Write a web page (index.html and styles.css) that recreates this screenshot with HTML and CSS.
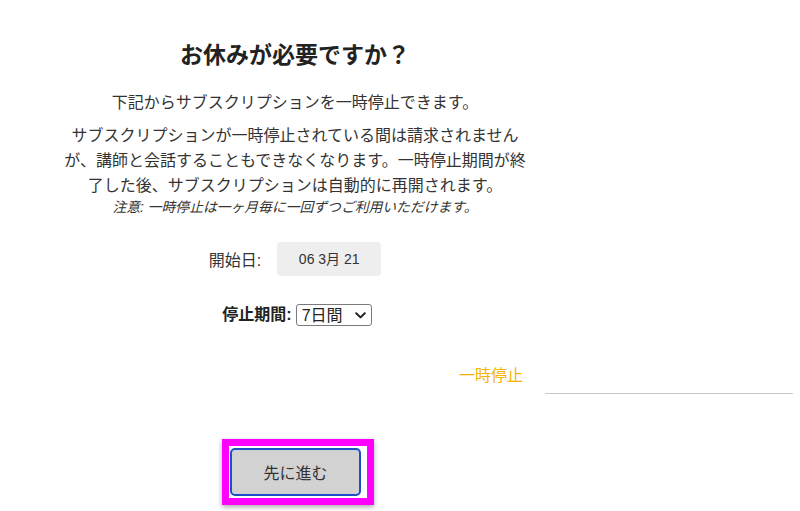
FILE: index.html
```html
<html>
  <head>
    <link rel="stylesheet" href="styles.css">
    <title>一時停止</title>
  </head>
  <body>
    <div class="page">
      <div class="pause-box">
        <h2 class="title">お休みが必要ですか？</h2>
        <p class="lead">下記からサブスクリプションを一時停止できます。</p>
        <p class="desc">サブスクリプションが一時停止されている間は請求されませんが、講師と会話することもできなくなります。一時停止期間が終了した後、サブスクリプションは自動的に再開されます。</p>
        <p class="note">注意: 一時停止は一ヶ月毎に一回ずつご利用いただけます。</p>

        <div class="date-row">
          <span class="date-label">開始日:</span>
          <span class="date-box">06 3月 21</span>
        </div>

        <div class="period-row">
          <label class="period-label" for="period">停止期間:</label>
          <span class="select-wrap">
            <select id="period" class="period-select">
              <option>7日間</option>
              <option>14日間</option>
              <option>30日間</option>
            </select>
            <svg class="chevron" width="11" height="7" viewBox="0 0 11 7">
              <path d="M1.2 1.2 L5.5 5.4 L9.8 1.2" fill="none" stroke="#222" stroke-width="2" stroke-linecap="round" stroke-linejoin="round"/>
            </svg>
          </span>
        </div>
      </div>

      <div class="tabs">
        <div class="tab-left"><a class="tab-link" href="#">一時停止</a></div>
        <div class="tab-line"></div>
      </div>

      <div class="actions">
        <div class="highlight">
          <button class="next-btn">先に進む</button>
        </div>
      </div>
    </div>
  </body>
</html>
```

FILE: styles.css
```css
body {
  margin: 0;
  background: #fff;
  font-family: "Liberation Sans", "Noto Sans CJK JP", sans-serif;
  color: #333;
}

.page {
  width: 800px;
}

.pause-box {
  width: 590px;
  display: flex;
  flex-direction: column;
  align-items: center;
  text-align: center;
}

.title {
  margin: 40px 0 0;
  font-size: 23px;
  line-height: 30px;
  font-weight: bold;
  color: #222;
}

.lead {
  margin: 21px 0 0;
  font-size: 16px;
  line-height: 24px;
}

.desc {
  width: 470px;
  margin: 8px 0 0;
  font-size: 16px;
  line-height: 25px;
}

.note {
  margin: 1px 0 0;
  font-size: 13.8px;
  line-height: 18px;
  font-style: italic;
}

.date-row {
  margin-top: 25px;
  display: flex;
  align-items: center;
  gap: 16px;
}

.date-label {
  font-size: 16px;
}

.date-box {
  width: 104px;
  height: 34px;
  line-height: 34px;
  background: #eeeeee;
  border-radius: 4px;
  font-size: 14px;
}

.period-row {
  margin-top: 28px;
  margin-left: 4px;
  display: flex;
  align-items: center;
  gap: 4px;
}

.period-label {
  font-size: 16px;
  line-height: 22px;
  font-weight: bold;
  color: #222;
}

.select-wrap {
  position: relative;
  display: inline-block;
}

.period-select {
  appearance: none;
  -webkit-appearance: none;
  display: block;
  width: 76px;
  height: 22px;
  padding: 0 0 0 5px;
  border: 1px solid #7a7a7a;
  border-radius: 3px;
  background: #fff;
  font-family: "Liberation Sans", "Noto Sans CJK JP", sans-serif;
  font-size: 16px;
  color: #222;
}

.chevron {
  position: absolute;
  right: 6px;
  top: 8px;
}

.tabs {
  margin-top: 34px;
  display: flex;
  align-items: flex-end;
  height: 34px;
}

.tab-left {
  width: 523px;
  padding-top: 4px;
  text-align: right;
  align-self: flex-start;
}

.tab-link {
  font-size: 16px;
  line-height: 24px;
  color: #f4b400;
  text-decoration: none;
}

.tab-line {
  margin-left: 22px;
  width: 248px;
  border-bottom: 1px solid #c8c8c8;
}

.actions {
  width: 590px;
  margin-top: 45px;
  display: flex;
  justify-content: center;
}

.highlight {
  margin-left: 6px;
  border: 7px solid #ff00ff;
  padding: 2px 6px 2px 1px;
  box-shadow: 0 2px 5px rgba(0, 0, 0, 0.35);
}

.next-btn {
  display: block;
  width: 131px;
  height: 48px;
  background: #d2d2d2;
  border: 2px solid #1a4fc8;
  border-radius: 5px;
  font-family: "Liberation Sans", "Noto Sans CJK JP", sans-serif;
  font-size: 16px;
  color: #333;
}
```
